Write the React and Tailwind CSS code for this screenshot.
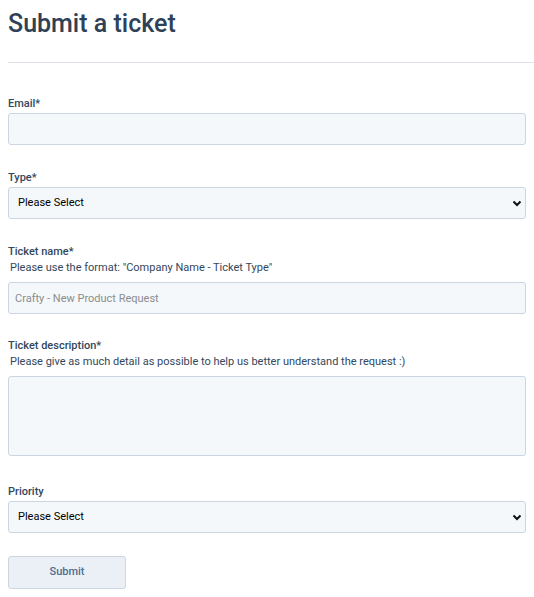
import React from "react";

const font = { fontFamily: "Roboto, 'Liberation Sans', sans-serif" };

// chevron drawn over the select box
const Chevron = () => (
  <svg
    className="pointer-events-none absolute right-[4px] top-1/2 -translate-y-1/2"
    width="10"
    height="10"
    viewBox="0 0 10 10"
  >
    <path d="M1.5 3.5 L5 7 L8.5 3.5" fill="none" stroke="#111" strokeWidth="2" />
  </svg>
);

const Label = ({ text, help }) => (
  <div className="mb-[1px]">
    <div className="text-[11px] leading-4 font-medium text-[#33475b]">{text}</div>
    {help && (
      <div className="text-[11px] leading-4 text-[#33475b] pl-[2px] mb-[6px]">{help}</div>
    )}
  </div>
);

const boxCls =
  "w-[518px] bg-[#f5f8fa] border border-[#cbd6e2] rounded-[3px] text-[11px] outline-none";

const SelectField = () => (
  <div className="relative w-[518px]">
    <select
      className={`${boxCls} h-[32px] appearance-none pl-[9px] text-[#000]`}
      defaultValue=""
    >
      <option value="">Please Select</option>
    </select>
    <Chevron />
  </div>
);

export default function App() {
  return (
    <div className="bg-white min-h-screen pl-[8px]" style={font}>
      <h1 className="text-[25px] font-medium text-[#2f4156] leading-8 pt-[8px]">
        Submit a ticket
      </h1>
      <div className="h-px bg-[#dfe3eb] mt-[22px] mb-[33px]" />

      <div className="mb-[25px]">
        <Label text="Email*" />
        <input className={`${boxCls} h-[32px] px-[6px]`} />
      </div>

      <div className="mb-[25px]">
        <Label text="Type*" />
        <SelectField />
      </div>

      <div className="mb-[24px]">
        <Label
          text="Ticket name*"
          help='Please use the format: "Company Name - Ticket Type"'
        />
        <input
          className={`${boxCls} h-[32px] px-[6px] placeholder:text-[#8c8c8c]`}
          placeholder="Crafty - New Product Request"
        />
      </div>

      <div className="mb-[28px]">
        <Label
          text="Ticket description*"
          help="Please give as much detail as possible to help us better understand the request :)"
        />
        <textarea className={`${boxCls} h-[80px] block resize-none px-[6px] py-[4px]`} />
      </div>

      <div className="mb-[23px]">
        <Label text="Priority" />
        <SelectField />
      </div>

      <button className="w-[118px] h-[33px] bg-[#eaf0f6] border border-[#cbd6e2] rounded-[3px] text-[11px] font-medium text-[#506e91]">
        Submit
      </button>
    </div>
  );
}
